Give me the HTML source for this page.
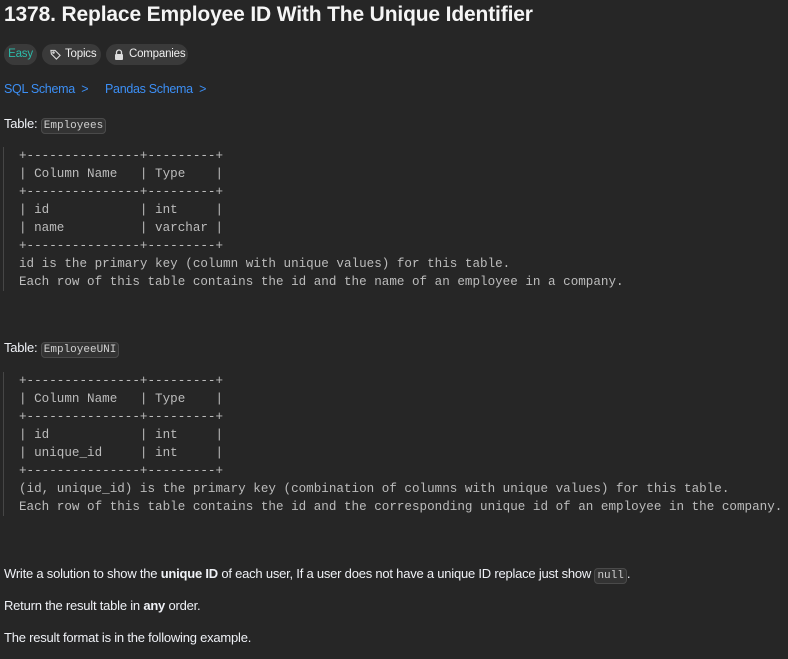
<!DOCTYPE html>
<html><head><style>
body{margin:0;width:788px;height:659px;background:#262626;overflow:hidden;font-family:"Liberation Sans",sans-serif;color:#eff1f6;position:relative}
.a{position:absolute;white-space:nowrap}
h1{position:absolute;left:4px;top:3px;margin:0;font-size:21px;font-weight:bold;letter-spacing:-0.15px;color:#f5f5f5}
.pill{position:absolute;top:44px;height:21px;border-radius:11px;background:#3a3a3a;font-size:11.5px;line-height:21px;color:#eee;letter-spacing:-0.2px}
.link{color:#3c8ff5;font-size:12.5px;letter-spacing:-0.3px}
.t{font-size:13px;letter-spacing:-0.22px}
code{font-family:"Liberation Mono",monospace;font-size:11px;background:#333;border:1px solid #4a4a4a;border-radius:4px;padding:1px 2px;color:#d0d0d0;letter-spacing:0}
pre{position:absolute;left:3px;margin:0;padding-left:15px;border-left:1px solid #464646;font-family:"Liberation Mono",monospace;font-size:12.6px;line-height:18px;color:#bcbcbc}
</style></head><body>
<h1>1378. Replace Employee ID With The Unique Identifier</h1>
<div class="pill" style="left:4px;width:33px;text-align:center;color:#2cbbaa">Easy</div>
<div class="pill" style="left:42px;width:59px">
<svg style="position:absolute;left:8px;top:5px" width="11" height="11" viewBox="0 0 12 12" fill="none" stroke="#ddd" stroke-width="1.2"><path d="M1 1.5h4.5l5.5 5.5-4 4L1.5 5.5z"/><circle cx="3.8" cy="3.8" r="0.8"/></svg>
<span style="position:absolute;left:23px">Topics</span></div>
<div class="pill" style="left:106px;width:82px">
<svg style="position:absolute;left:8px;top:5px" width="10" height="11" viewBox="0 0 10 11"><path d="M2.5 5V3.5a2.5 2.5 0 0 1 5 0V5" fill="none" stroke="#ddd" stroke-width="1.3"/><rect x="1" y="5" width="8" height="6" rx="1" fill="#ddd"/></svg>
<span style="position:absolute;left:23px">Companies</span></div>
<div class="a link" style="left:4px;top:82px">SQL Schema&nbsp;&nbsp;<span style="color:#3c8ff5">&gt;</span></div>
<div class="a link" style="left:105px;top:82px">Pandas Schema&nbsp;&nbsp;&gt;</div>
<div class="a t" style="left:4px;top:116px">Table: <code>Employees</code></div>
<pre style="top:147px;height:144px">+---------------+---------+
| Column Name   | Type    |
+---------------+---------+
| id            | int     |
| name          | varchar |
+---------------+---------+
id is the primary key (column with unique values) for this table.
Each row of this table contains the id and the name of an employee in a company.</pre>
<div class="a t" style="left:4px;top:340px">Table: <code>EmployeeUNI</code></div>
<pre style="top:372px;height:144px">+---------------+---------+
| Column Name   | Type    |
+---------------+---------+
| id            | int     |
| unique_id     | int     |
+---------------+---------+
(id, unique_id) is the primary key (combination of columns with unique values) for this table.
Each row of this table contains the id and the corresponding unique id of an employee in the company.</pre>
<div class="a t" style="left:4px;top:566px">Write a solution to show the <b>unique ID</b> of each user, If a user does not have a unique ID replace just show <code>null</code>.</div>
<div class="a t" style="left:4px;top:598px">Return the result table in <b>any</b> order.</div>
<div class="a t" style="left:4px;top:630px">The result format is in the following example.</div>
</body></html>
